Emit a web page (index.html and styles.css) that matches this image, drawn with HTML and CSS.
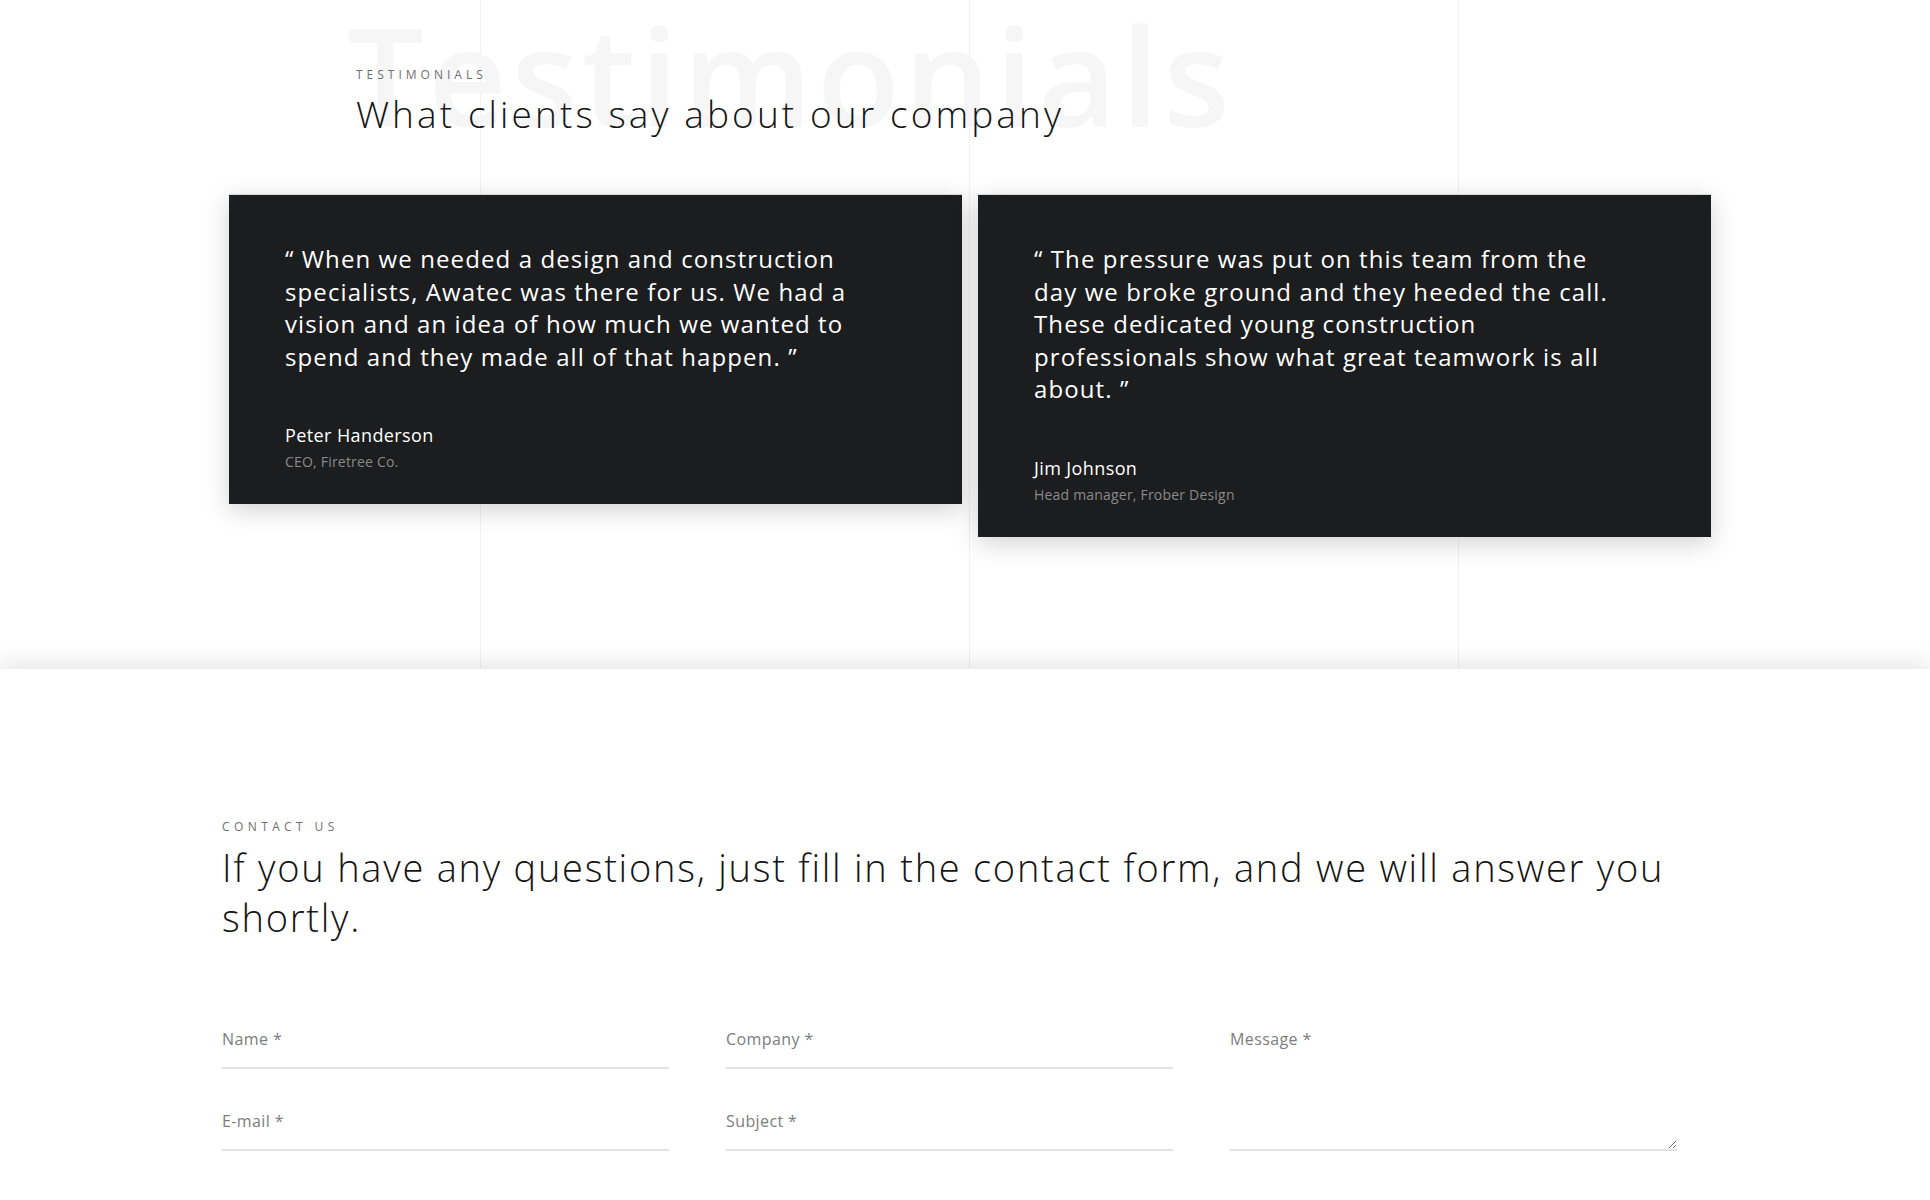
FILE: index.html
```html
<!DOCTYPE html>
<html lang="en">
<head>
<meta charset="utf-8">
<title>Testimonials</title>
<link rel="stylesheet" href="styles.css">
</head>
<body>
<section class="testimonials">
  <div class="t-container">
    <header class="t-head">
      <div class="watermark" aria-hidden="true">Testimonials</div>
      <p class="eyebrow">Testimonials</p>
      <h2 class="t-title">What clients say about our company</h2>
    </header>
    <div class="cards">
      <article class="card">
        <p class="quote">&#8220; When we needed a design and construction specialists, Awatec was there for us. We had a vision and an idea of how much we wanted to spend and they made all of that happen. &#8221;</p>
        <p class="name">Peter Handerson</p>
        <p class="role">CEO, Firetree Co.</p>
      </article>
      <article class="card">
        <p class="quote">&#8220; The pressure was put on this team from the day we broke ground and they heeded the call. These dedicated young construction professionals show what great teamwork is all about. &#8221;</p>
        <p class="name">Jim Johnson</p>
        <p class="role">Head manager, Frober Design</p>
      </article>
    </div>
  </div>
</section>
<section class="contact">
  <div class="c-container">
    <p class="eyebrow eyebrow-contact">Contact us</p>
    <h2 class="c-title">If you have any questions, just fill in the contact form, and we will answer you shortly.</h2>
    <form class="form">
      <label class="field f-name"><span class="f-label">Name *</span><input class="f-input" type="text"></label>
      <label class="field f-company"><span class="f-label">Company *</span><input class="f-input" type="text"></label>
      <label class="field f-message"><span class="f-label">Message *</span><textarea class="f-area"></textarea></label>
      <label class="field f-email"><span class="f-label">E-mail *</span><input class="f-input" type="email"></label>
      <label class="field f-subject"><span class="f-label">Subject *</span><input class="f-input" type="text"></label>
    </form>
  </div>
</section>
</body>
</html>
```
FILE: styles.css
```css
* { box-sizing: border-box; }
html, body { margin: 0; padding: 0; }
body {
  font-family: "Open Sans", "Liberation Sans", sans-serif;
  color: #1a1a1a;
  background: #fff;
}
p, h2 { margin: 0; }

.testimonials {
  height: 669px;
  overflow: hidden;
  background-color: #fff;
  background-image: linear-gradient(to right, #f1f1f1 0, #f1f1f1 1px, transparent 1px);
  background-size: 489px 100%;
  background-position: 480px 0;
}
.t-container {
  width: 1481px;
  margin-left: 229px;
}
.t-head {
  position: relative;
  padding: 67px 0 0 127px;
}
.watermark {
  position: absolute;
  left: 118px;
  top: 7px;
  font-size: 136px;
  line-height: 136px;
  font-weight: 600;
  color: #f6f6f6;
  white-space: nowrap;
  letter-spacing: 4.5px;
}
.eyebrow {
  position: relative;
  font-size: 12px;
  line-height: 16px;
  letter-spacing: 4px;
  text-transform: uppercase;
  color: #6f6f6f;
}
.t-title {
  position: relative;
  margin-top: 9px;
  font-size: 37px;
  line-height: 44px;
  font-weight: 300;
  letter-spacing: 3.1px;
  color: #151515;
}

.cards {
  position: relative;
  display: flex;
  align-items: flex-start;
  gap: 16px;
  margin-top: 58px;
}
.card {
  flex: 0 0 733px;
  background: #1c1d1f;
  padding: 48px 56px 32px 56px;
  box-shadow: 0 6px 24px rgba(0, 0, 0, 0.18);
  border-top: 1px solid #d9d9d9;
}
.quote {
  font-size: 24px;
  line-height: 32.6px;
  letter-spacing: 1.1px;
  color: #fff;
  max-width: 586px;
}
.name {
  margin-top: 50px;
  font-size: 18px;
  line-height: 24px;
  font-weight: 500;
  letter-spacing: 0.4px;
  color: #fff;
}
.role {
  margin-top: 5px;
  font-size: 14px;
  line-height: 20px;
  letter-spacing: 0.2px;
  color: #8a8a8a;
}

.contact {
  position: relative;
  z-index: 1;
  background: #fff;
  box-shadow: 0 -6px 22px rgba(0, 0, 0, 0.1);
  padding: 150px 0 200px;
}
.c-container {
  width: 1456px;
  margin-left: 222px;
}
.eyebrow-contact {
  letter-spacing: 4.4px;
}
.c-title {
  margin-top: 7px;
  font-size: 38px;
  line-height: 50px;
  font-weight: 300;
  letter-spacing: 1.75px;
  color: #151515;
}
.form {
  margin-top: 86px;
  display: grid;
  grid-template-columns: 447px 447px 447px;
  column-gap: 57px;
  row-gap: 41px;
}
.field {
  display: flex;
  flex-direction: column;
  border-bottom: 2px solid #e2e2e2;
}
.f-label {
  font-size: 16px;
  line-height: 22px;
  letter-spacing: 0.4px;
  color: #7d7d7d;
}
.f-input {
  height: 17px;
  border: 0;
  padding: 0;
  background: transparent;
  outline: none;
}
.f-message {
  grid-column: 3;
  grid-row: 1 / span 2;
}
.f-email { grid-column: 1; grid-row: 2; }
.f-subject { grid-column: 2; grid-row: 2; }
.f-area {
  flex: 1;
  border: 0;
  padding: 0;
  background: transparent;
  outline: none;
  resize: vertical;
  font-family: inherit;
}
```
